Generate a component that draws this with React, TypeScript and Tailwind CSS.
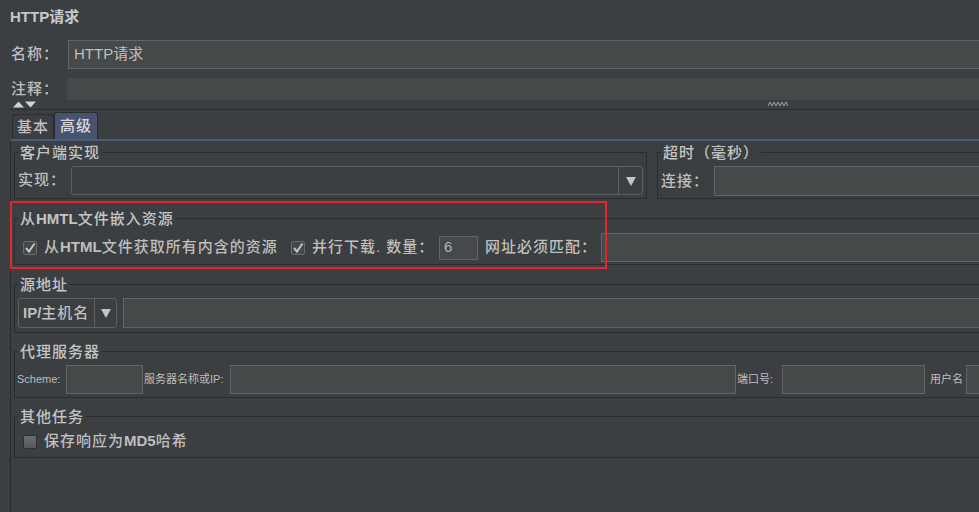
import React from "react";

const Box = ({ className = "", children }: { className?: string; children?: React.ReactNode }) => (
  <div className={`bg-[#45494a] border border-[#646464] flex items-center ${className}`}>{children}</div>
);

const Arrow = () => (
  <svg width="10" height="10" viewBox="0 0 10 10">
    <polygon points="0,1 10,1 5,10" fill="#c4c4c4" />
  </svg>
);

const Check = ({ checked }: { checked?: boolean }) =>
  checked ? (
    <span className="w-[14px] h-[14px] shrink-0 rounded-[2px] border border-[#6b6b6b] bg-[#43494a] flex items-center justify-center">
      <svg width="12" height="12" viewBox="0 0 12 12">
        <path d="M2 6 L5 9.5 L10.5 1.5" stroke="#c2c2c2" strokeWidth="2" fill="none" />
      </svg>
    </span>
  ) : (
    <span className="block w-[14px] h-[14px] shrink-0 rounded-[2px] border border-[#2f3133] bg-gradient-to-b from-[#6c6f71] to-[#56595b]" />
  );

const Group = ({ title, className = "", children }: { title: React.ReactNode; className?: string; children?: React.ReactNode }) => (
  <fieldset className={`border border-[#2b2b2b] min-w-0 ${className}`}>
    <legend className="ml-[3px] px-[2px] text-[15px] leading-[17px] tracking-[1px] text-[#c4c4c4]">{title}</legend>
    {children}
  </fieldset>
);

export default function App() {
  return (
    <div className="relative w-[979px] h-[512px] overflow-hidden bg-[#3c3f41] text-[#bebebe] font-medium font-['Liberation_Sans','Noto_Sans_CJK_SC',sans-serif]">
      <div className="w-[1200px] h-full flex flex-col">
        <div className="h-[40px] pt-[7px] pl-[10px] text-[15px] leading-[20px] font-bold text-[#c8c8c8]">HTTP请求</div>

        <div className="flex items-center h-[29px] pl-[10px]">
          <span className="w-[58px] pl-[1px] text-[15px] tracking-[1px]">名称：</span>
          <Box className="flex-1 h-full pl-[5px] text-[15px] font-normal">HTTP请求</Box>
        </div>

        <div className="flex items-center h-[22px] mt-[9px] pl-[10px]">
          <span className="w-[57px] pl-[1px] text-[15px] tracking-[1px]">注释：</span>
          <div className="flex-1 h-full bg-[#45494a]" />
        </div>

        <div className="h-[9px] flex items-center pl-[13px]">
          <svg width="24" height="7" viewBox="0 0 24 7">
            <polygon points="0,6.5 5.5,0.5 11,6.5" fill="#d2d2d2" />
            <polygon points="12,0.5 23,0.5 17.5,6.5" fill="#d2d2d2" />
          </svg>
          <svg className="ml-[731px]" width="20" height="5" viewBox="0 0 20 5">
            <polyline points="0,4 2,0 4,4 6,0 8,4 10,0 12,4 14,0 16,4 18,0 20,4" stroke="#a0a0a0" strokeWidth="1" fill="none" />
          </svg>
        </div>

        <div className="ml-[10px] border-t border-[#2b2b2b] h-[30px] flex items-end pl-[2px]">
          <div className="w-[42px] h-[25px] border border-b-0 border-[#2b2b2b] rounded-t-[3px] flex items-center justify-center text-[15px] tracking-[1px]">基本</div>
          <div className="w-[44px] h-[27px] border border-b-0 border-[#2b2b2b] rounded-t-[3px] bg-[#47546f] flex items-center justify-center text-[15px] tracking-[1px] text-[#d8d8d8]">高级</div>
        </div>
        <div className="ml-[10px] h-[2px] bg-[#4a5a7c]" />

        <div className="ml-[10px] flex-1 border-l border-[#2b2b2b] pl-[3px] pt-[3px] flex flex-col">
          <div className="flex gap-[10px]">
            <Group title="客户端实现" className="w-[633px] pt-[5px] pb-[3px]">
              <div className="flex items-center pl-[3px] pr-[3px]">
                <span className="w-[53px] text-[15px] tracking-[1px]">实现：</span>
                <div className="flex-1 h-[29px] border border-[#5e6060] rounded-[3px] flex">
                  <div className="flex-1" />
                  <div className="w-[24px] border-l border-[#5e6060] flex items-center justify-center">
                    <Arrow />
                  </div>
                </div>
              </div>
            </Group>
            <Group title="超时（毫秒）" className="flex-1 pt-[5px] pb-[2px]">
              <div className="flex items-center pl-[3px]">
                <span className="w-[53px] text-[15px] tracking-[1px]">连接：</span>
                <Box className="flex-1 h-[30px]" />
              </div>
            </Group>
          </div>

          <Group
            title={<>从<b className="tracking-normal">HMTL</b>文件嵌入资源</>}
            className="mt-[11px] pt-[6px] pb-[2px]"
          >
            <div className="flex items-center text-[15px] tracking-[1px]">
              <span className="ml-[8px]"><Check checked /></span>
              <span className="ml-[7px] w-[234px] whitespace-nowrap">从<b className="tracking-normal">HTML</b>文件获取所有内含的资源</span>
              <span className="ml-[13px]"><Check checked /></span>
              <span className="ml-[7px] w-[127px] whitespace-nowrap">并行下载. 数量：</span>
              <Box className="w-[39px] h-[24px] pl-[4px] text-[#aab4c8] tracking-normal font-normal">6</Box>
              <span className="ml-[7px] w-[116px] whitespace-nowrap">网址必须匹配：</span>
              <Box className="flex-1 h-[29px]" />
            </div>
          </Group>

          <Group title="源地址" className="mt-[11px] pt-[5px] pb-[4px]">
            <div className="flex items-center">
              <div className="ml-[3px] w-[99px] h-[30px] border border-[#5e6060] rounded-[3px] flex">
                <div className="w-[75px] flex items-center pl-[4px] text-[15px] tracking-[1px] whitespace-nowrap"><b className="tracking-normal">IP/</b>主机名</div>
                <div className="flex-1 border-l border-[#5e6060] flex items-center justify-center">
                  <Arrow />
                </div>
              </div>
              <Box className="ml-[6px] flex-1 h-[30px]" />
            </div>
          </Group>

          <Group title="代理服务器" className="mt-[10px] pt-[5px] pb-[3px]">
            <div className="flex items-center text-[11px] font-normal">
              <span className="ml-[2px] w-[49px]">Scheme:</span>
              <Box className="w-[77px] h-[29px]" />
              <span className="ml-[1px] w-[86px] whitespace-nowrap">服务器名称或IP:</span>
              <Box className="w-[506px] h-[29px]" />
              <span className="ml-[1px] w-[45px] whitespace-nowrap">端口号:</span>
              <Box className="w-[143px] h-[29px]" />
              <span className="ml-[5px] w-[36px] whitespace-nowrap">用户名</span>
              <Box className="flex-1 h-[29px]" />
            </div>
          </Group>

          <Group title="其他任务" className="mt-[10px] pt-[4px] pb-[3px]">
            <div className="flex items-center h-[25px] text-[15px] tracking-[1px]">
              <span className="ml-[8px]"><Check /></span>
              <span className="ml-[7px] whitespace-nowrap">保存响应为<b className="tracking-normal">MD5</b>哈希</span>
            </div>
          </Group>
        </div>
      </div>

      <div className="absolute left-[10px] top-[201px] w-[597px] h-[68px] border-2 border-[#e3262c]" />
    </div>
  );
}
